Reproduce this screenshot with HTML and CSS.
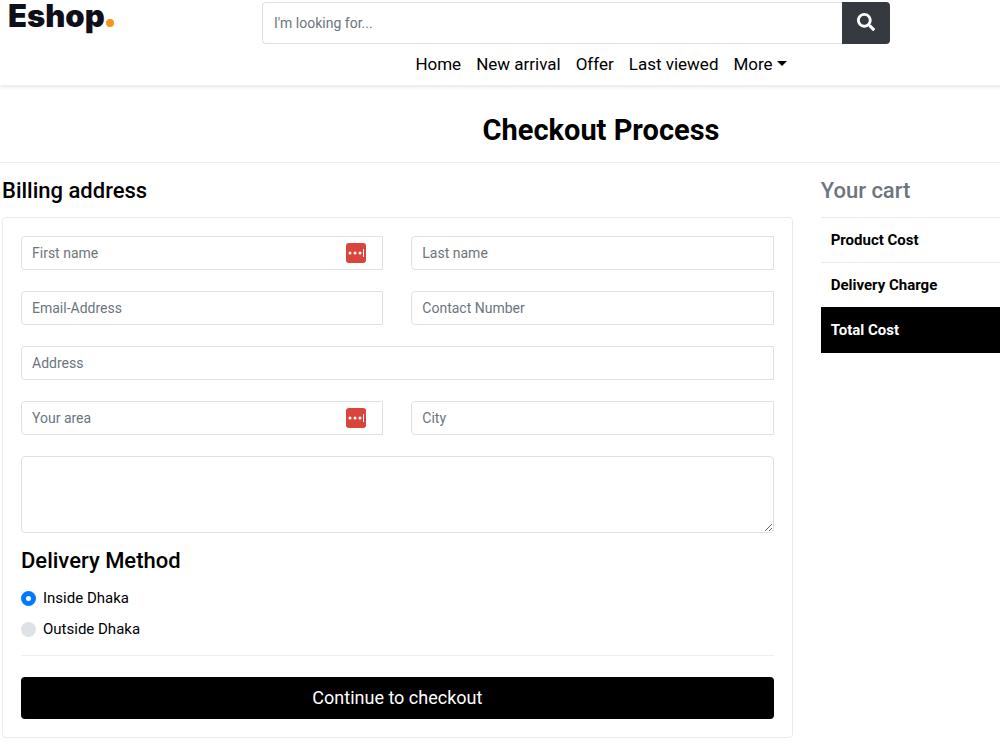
FILE: index.html
```html
<!DOCTYPE html>
<html lang="en">

<head>
    <meta charset="UTF-8">
    <meta name="viewport" content="width=device-width, initial-scale=1.0">
    <title>Eshop - Checkout</title>
    <link rel="stylesheet" href="styles.css">
</head>

<body>
    <div class="page">
        <header class="header">
            <div class="header-top">
                <a href="#" class="logo">Eshop<svg class="logo-dot" viewBox="0 0 8 8"><circle cx="4" cy="4" r="4" fill="#f7941d"/></svg></a>
                <form class="search">
                    <input type="text" name="q" placeholder="I'm looking for..." aria-label="Search">
                    <button type="submit" aria-label="Search">
                        <svg viewBox="0 0 512 512" width="18" height="18"><path fill="#fff" d="M505 442.7L405.3 343c-4.500-4.500-10.600-7-17-7H372c27.600-35.300 44-79.700 44-128C416 93.100 322.900 0 208 0S0 93.100 0 208s93.100 208 208 208c48.300 0 92.700-16.400 128-44v16.300c0 6.400 2.500 12.500 7 17l99.700 99.700c9.400 9.400 24.600 9.400 33.900 0l28.300-28.300c9.400-9.400 9.400-24.600.1-34zM208 336c-70.700 0-128-57.200-128-128 0-70.700 57.200-128 128-128 70.700 0 128 57.200 128 128 0 70.700-57.200 128-128 128z"/></svg>
                    </button>
                </form>
            </div>
            <nav class="nav">
                <a href="#">Home</a>
                <a href="#">New arrival</a>
                <a href="#">Offer</a>
                <a href="#">Last viewed</a>
                <a href="#" class="dropdown">More</a>
            </nav>
        </header>

        <h1 class="title">Checkout Process</h1>

        <main class="checkout">
            <section>
                <h2>Billing address</h2>
                <form class="card">
                    <div class="fields">
                        <div class="field">
                            <input type="text" name="first_name" placeholder="First name" aria-label="First name">
                            <svg class="key-icon" viewBox="0 0 20 20"><rect width="20" height="20" rx="3" fill="#d9453a"/><g fill="#fff"><circle cx="4" cy="10" r="1.500"/><circle cx="9" cy="10" r="1.500"/><circle cx="14" cy="10" r="1.500"/><rect x="17" y="6" width="1" height="8"/></g></svg>
                        </div>
                        <input type="text" name="last_name" placeholder="Last name" aria-label="Last name">
                        <input type="email" name="email" placeholder="Email-Address" aria-label="Email-Address">
                        <input type="text" name="phone" placeholder="Contact Number" aria-label="Contact Number">
                        <input type="text" name="address" class="wide" placeholder="Address" aria-label="Address">
                        <div class="field">
                            <input type="text" name="area" placeholder="Your area" aria-label="Your area">
                            <svg class="key-icon" viewBox="0 0 20 20"><rect width="20" height="20" rx="3" fill="#d9453a"/><g fill="#fff"><circle cx="4" cy="10" r="1.500"/><circle cx="9" cy="10" r="1.500"/><circle cx="14" cy="10" r="1.500"/><rect x="17" y="6" width="1" height="8"/></g></svg>
                        </div>
                        <input type="text" name="city" placeholder="City" aria-label="City">
                        <textarea name="note" class="wide" aria-label="Note"></textarea>
                    </div>

                    <h2>Delivery Method</h2>
                    <div class="radios">
                        <div class="radio">
                            <input type="radio" id="inside" name="delivery" checked>
                            <label for="inside">Inside Dhaka</label>
                        </div>
                        <div class="radio">
                            <input type="radio" id="outside" name="delivery">
                            <label for="outside">Outside Dhaka</label>
                        </div>
                    </div>
                    <hr>
                    <button type="submit" class="submit">Continue to checkout</button>
                </form>
            </section>

            <aside>
                <h2 class="muted">Your cart</h2>
                <table class="cart">
                    <tr><th>Product Cost</th></tr>
                    <tr><th>Delivery Charge</th></tr>
                    <tr class="total"><th>Total Cost</th></tr>
                </table>
            </aside>
        </main>
    </div>
</body>

</html>
```

FILE: styles.css
```css
* {
    box-sizing: border-box;
}

body {
    margin: 0;
    font-family: Roboto, Arial, sans-serif;
    font-size: 15px;
    color: #000;
    background-color: #fff;
    overflow-x: hidden;
}

/* the page is wider than the window, the cart runs off to the right */
.page {
    width: 120%;
}

input,
textarea,
button {
    font-family: inherit;
    font-size: 14px;
}

input::placeholder {
    color: #6c757d;
    opacity: 1;
}

h1,
h2 {
    margin: 0;
}

h2 {
    font-size: 22px;
    line-height: 26px;
    font-weight: 500;
}

.header {
    height: 85px;
    box-shadow: 0 2px 4px rgba(0, 0, 0, 0.1);
}

.header-top {
    display: flex;
    align-items: flex-start;
    padding: 2px 0 0 8px;
}

.logo {
    width: 254px;
    font-family: Inter, sans-serif;
    font-size: 31px;
    line-height: 28px;
    font-weight: 900;
    color: #0f0f19;
    text-decoration: none;
}

.logo-dot {
    width: 8px;
    height: 8px;
    margin-left: 1px;
}

.search {
    display: flex;
    width: 628px;
}

.search input {
    flex: 1;
    height: 42px;
    padding: 0 11px;
    border: 1px solid #dee2e6;
    border-right: none;
    border-radius: 4px 0 0 4px;
}

.search button {
    width: 48px;
    padding: 0;
    border: none;
    border-radius: 0 4px 4px 0;
    background-color: #343a40;
    cursor: pointer;
}

.nav {
    display: flex;
    justify-content: center;
    gap: 15px;
    padding-top: 9px;
    padding-left: 2px;
}

.nav a {
    font-size: 17px;
    line-height: 22px;
    color: #000;
    text-decoration: none;
}

.dropdown::after {
    content: "";
    display: inline-block;
    margin-left: 4px;
    vertical-align: 4px;
    border-top: 5px solid;
    border-left: 5px solid transparent;
    border-right: 5px solid transparent;
}

.title {
    padding: 28px 0 15px 2px;
    border-bottom: 1px solid #eee;
    font-size: 29px;
    line-height: 34px;
    font-weight: 700;
    text-align: center;
}

.checkout {
    display: grid;
    grid-template-columns: 66% 1fr;
    gap: 28px;
    padding: 15px 0 12px 2px;
}

.card {
    margin-top: 13px;
    padding: 18px;
    border: 1px solid #e9ecef;
    border-radius: 4px;
}

.fields {
    display: grid;
    grid-template-columns: 1fr 1fr;
    gap: 21px 28px;
    margin-bottom: 15px;
}

.fields input,
.fields textarea {
    width: 100%;
    height: 34px;
    padding: 0 10px;
    border: 1px solid #dee2e6;
    border-radius: 4px 0 0 4px;
}

.fields textarea {
    display: block;
    height: 77px;
    border-radius: 4px;
}

.fields .wide {
    grid-column: 1 / 3;
}

.field {
    position: relative;
}

.key-icon {
    position: absolute;
    top: 7px;
    right: 17px;
    width: 20px;
    height: 20px;
}

.radios {
    display: grid;
    gap: 9px;
    margin-top: 13px;
}

.radio {
    display: flex;
    align-items: center;
    gap: 7px;
    line-height: 22px;
}

.radio input {
    appearance: none;
    width: 15px;
    height: 15px;
    margin: 0;
    border-radius: 50%;
    background-color: #dee2e6;
}

.radio input:checked {
    border: 5px solid #007bff;
    background-color: #fff;
}

hr {
    margin: 15px 0 21px;
    border: none;
    border-top: 1px solid #eee;
}

.submit {
    display: block;
    width: 100%;
    height: 42px;
    padding: 0 0 2px;
    border: none;
    border-radius: 4px;
    background-color: #000;
    color: #fff;
    font-size: 18px;
    cursor: pointer;
}

.muted {
    color: #6c757d;
}

.cart {
    width: 100%;
    margin-top: 13px;
    border-collapse: collapse;
}

.cart th {
    height: 45px;
    padding: 0 10px;
    border-top: 1px solid #e9ecef;
    font-weight: 700;
    text-align: left;
}

.cart .total th {
    border-color: #000;
    background-color: #000;
    color: #fff;
}
```
